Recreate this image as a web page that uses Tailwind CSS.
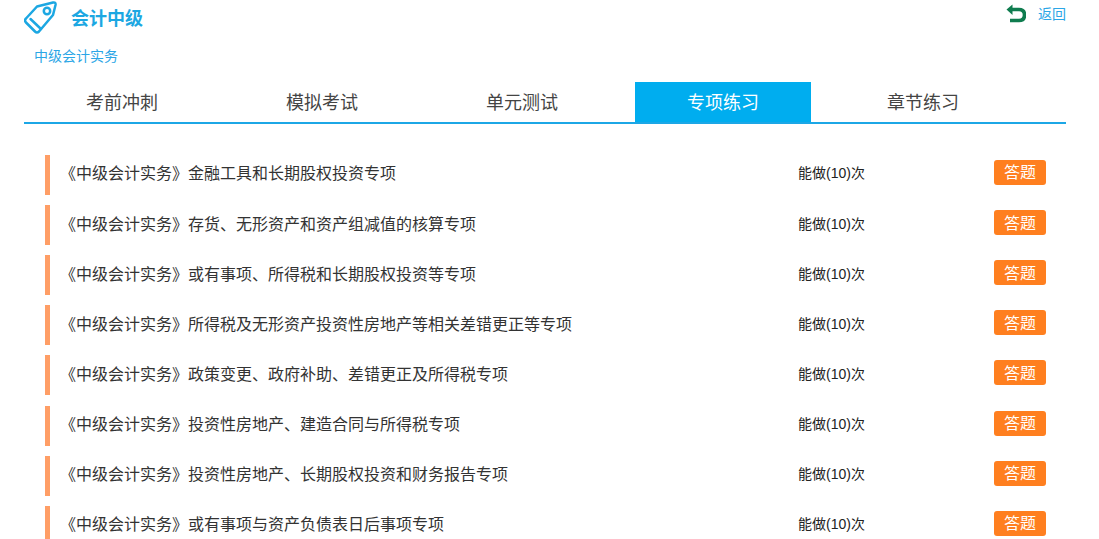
<!DOCTYPE html>
<html lang="zh-CN">
  <head>
    <meta charset="UTF-8" />
    <title>会计中级</title>
    <script src="https://cdn.jsdelivr.net/npm/@tailwindcss/browser@4"></script>
  </head>
  <body class="h-screen overflow-hidden bg-white font-['Liberation_Sans','Noto_Sans_CJK_SC',sans-serif] text-[#333]">
    <div class="ml-[24px] w-[1042px]">
      <!-- Header -->
      <header class="flex h-[37px] items-start justify-between">
        <div class="flex items-center">
          <svg class="h-[36px] w-[36px]" viewBox="0 0 36 36" fill="none" stroke="#1ca7e2" stroke-width="2.5" stroke-linejoin="round" stroke-linecap="round">
            <path d="M13 6.5 L29 2.5 Q32 2 31.5 5 L29 15 L15 31.5 Q13 33.5 11 31.5 L2 22.5 Q0 20.5 2 18.5 Z" />
            <circle cx="23" cy="11" r="3.2" />
            <path d="M6.5 19 L17 29" />
          </svg>
          <h1 class="mt-[2px] ml-[11px] text-[18px] font-bold text-[#1ca7e2]">会计中级</h1>
        </div>
        <a class="mt-[3px] flex items-center text-[14px] leading-[20px] text-[#2ba6e6]">
          <svg class="h-[20px] w-[20px]" viewBox="0 0 20 20" fill="none">
            <path d="M6.5 0.5 L0.5 5.5 L6.5 11 Z" fill="#0f7c4f" />
            <path d="M5 5.5 H13 Q18.5 5.5 18.5 11 Q18.5 16.5 13 16.5 H4" stroke="#0f7c4f" stroke-width="3.6" />
          </svg>
          <span class="mt-[1px] ml-[12px]">返回</span>
        </a>
      </header>

      <p class="mt-[10px] ml-[10px] h-[18px] text-[14px] leading-[18px] text-[#2ba6e6]">中级会计实务</p>

      <!-- Tabs -->
      <nav class="mt-[17px] flex h-[42px] gap-[24px] border-b-2 border-[#1ca7e6] pl-[11px] text-[18px] text-[#444]">
        <a class="flex h-[40px] w-[176px] items-center justify-center pt-[2px] pr-[2px]">考前冲刺</a>
        <a class="flex h-[40px] w-[176px] items-center justify-center pt-[2px] pr-[2px]">模拟考试</a>
        <a class="flex h-[40px] w-[176px] items-center justify-center pt-[2px] pr-[2px]">单元测试</a>
        <a class="flex h-[40px] w-[176px] items-center justify-center bg-[#00adef] pt-[2px] text-white">专项练习</a>
        <a class="flex h-[40px] w-[176px] items-center justify-center pt-[2px]">章节练习</a>
      </nav>

      <!-- Exercise list -->
      <ul class="mt-[30.9px] ml-[21px] w-[1001px]">
        <li class="mb-[10.14px] flex h-[40px] items-center border-l-[5px] border-[#ff9e66] pl-[12px]">
          <span class="mb-[1px] w-[736px] -translate-x-[2px] text-[16px] text-[#333]">《中级会计实务》金融工具和长期股权投资专项</span>
          <span class="mb-[2px] w-[196px] text-[14px] text-[#222]">能做(10)次</span>
          <a class="mb-[5px] flex h-[25px] w-[52px] items-center justify-center rounded-[3px] bg-[#ff7f1f] pt-[2px] text-[16px] text-white">答题</a>
        </li>
        <li class="mb-[10.14px] flex h-[40px] items-center border-l-[5px] border-[#ff9e66] pl-[12px]">
          <span class="mb-[1px] w-[736px] -translate-x-[2px] text-[16px] text-[#333]">《中级会计实务》存货、无形资产和资产组减值的核算专项</span>
          <span class="mb-[2px] w-[196px] text-[14px] text-[#222]">能做(10)次</span>
          <a class="mb-[5px] flex h-[25px] w-[52px] items-center justify-center rounded-[3px] bg-[#ff7f1f] pt-[2px] text-[16px] text-white">答题</a>
        </li>
        <li class="mb-[10.14px] flex h-[40px] items-center border-l-[5px] border-[#ff9e66] pl-[12px]">
          <span class="mb-[1px] w-[736px] -translate-x-[2px] text-[16px] text-[#333]">《中级会计实务》或有事项、所得税和长期股权投资等专项</span>
          <span class="mb-[2px] w-[196px] text-[14px] text-[#222]">能做(10)次</span>
          <a class="mb-[5px] flex h-[25px] w-[52px] items-center justify-center rounded-[3px] bg-[#ff7f1f] pt-[2px] text-[16px] text-white">答题</a>
        </li>
        <li class="mb-[10.14px] flex h-[40px] items-center border-l-[5px] border-[#ff9e66] pl-[12px]">
          <span class="mb-[1px] w-[736px] -translate-x-[2px] text-[16px] text-[#333]">《中级会计实务》所得税及无形资产投资性房地产等相关差错更正等专项</span>
          <span class="mb-[2px] w-[196px] text-[14px] text-[#222]">能做(10)次</span>
          <a class="mb-[5px] flex h-[25px] w-[52px] items-center justify-center rounded-[3px] bg-[#ff7f1f] pt-[2px] text-[16px] text-white">答题</a>
        </li>
        <li class="mb-[10.14px] flex h-[40px] items-center border-l-[5px] border-[#ff9e66] pl-[12px]">
          <span class="mb-[1px] w-[736px] -translate-x-[2px] text-[16px] text-[#333]">《中级会计实务》政策变更、政府补助、差错更正及所得税专项</span>
          <span class="mb-[2px] w-[196px] text-[14px] text-[#222]">能做(10)次</span>
          <a class="mb-[5px] flex h-[25px] w-[52px] items-center justify-center rounded-[3px] bg-[#ff7f1f] pt-[2px] text-[16px] text-white">答题</a>
        </li>
        <li class="mb-[10.14px] flex h-[40px] items-center border-l-[5px] border-[#ff9e66] pl-[12px]">
          <span class="mb-[1px] w-[736px] -translate-x-[2px] text-[16px] text-[#333]">《中级会计实务》投资性房地产、建造合同与所得税专项</span>
          <span class="mb-[2px] w-[196px] text-[14px] text-[#222]">能做(10)次</span>
          <a class="mb-[5px] flex h-[25px] w-[52px] items-center justify-center rounded-[3px] bg-[#ff7f1f] pt-[2px] text-[16px] text-white">答题</a>
        </li>
        <li class="mb-[10.14px] flex h-[40px] items-center border-l-[5px] border-[#ff9e66] pl-[12px]">
          <span class="mb-[1px] w-[736px] -translate-x-[2px] text-[16px] text-[#333]">《中级会计实务》投资性房地产、长期股权投资和财务报告专项</span>
          <span class="mb-[2px] w-[196px] text-[14px] text-[#222]">能做(10)次</span>
          <a class="mb-[5px] flex h-[25px] w-[52px] items-center justify-center rounded-[3px] bg-[#ff7f1f] pt-[2px] text-[16px] text-white">答题</a>
        </li>
        <li class="mb-[10.14px] flex h-[40px] items-center border-l-[5px] border-[#ff9e66] pl-[12px]">
          <span class="mb-[1px] w-[736px] -translate-x-[2px] text-[16px] text-[#333]">《中级会计实务》或有事项与资产负债表日后事项专项</span>
          <span class="mb-[2px] w-[196px] text-[14px] text-[#222]">能做(10)次</span>
          <a class="mb-[5px] flex h-[25px] w-[52px] items-center justify-center rounded-[3px] bg-[#ff7f1f] pt-[2px] text-[16px] text-white">答题</a>
        </li>
      </ul>
    </div>
  </body>
</html>
